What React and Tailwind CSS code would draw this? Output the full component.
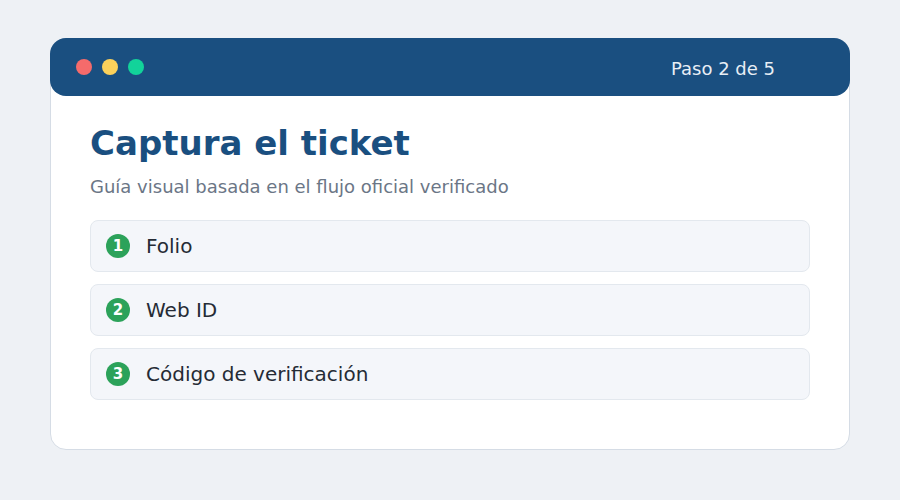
import React from "react";

const items = ["Folio", "Web ID", "Código de verificación"];

export default function App() {
  return (
    <div className="w-[900px] h-[500px] bg-[#eef1f5] flex items-start justify-center pt-[38px]" style={{ fontFamily: '"DejaVu Sans", sans-serif' }}>
      <div className="w-[800px] h-[412px] bg-white border border-[#d5dce5] rounded-2xl flex flex-col">
        <div className="h-[58px] -mx-px -mt-px bg-[#1a4f80] rounded-2xl flex items-center pl-[26px] pr-[75px]">
          <div className="flex gap-[10px]">
            <span className="w-4 h-4 rounded-full bg-[#f56b6b]" />
            <span className="w-4 h-4 rounded-full bg-[#fbd15b]" />
            <span className="w-4 h-4 rounded-full bg-[#12d39a]" />
          </div>
          <div className="ml-auto mt-[4px] text-[18px] leading-[22px] text-[#e8eef5]">Paso 2 de 5</div>
        </div>
        <div className="px-[39px] pt-[27px]">
          <h1 className="text-[34px] leading-[40px] font-bold text-[#1a4f80]">Captura el ticket</h1>
          <p className="mt-[13px] text-[18px] leading-[22px] text-[#6b7686]">Guía visual basada en el flujo oficial verificado</p>
          <div className="mt-[22px] flex flex-col gap-3">
            {items.map((t, i) => (
              <div key={t} className="h-[52px] bg-[#f4f6fa] border border-[#e3e8ee] rounded-lg flex items-center pl-[15px]">
                <span className="w-6 h-6 rounded-full bg-[#2ca25a] text-white text-[15px] font-bold flex items-center justify-center">{i + 1}</span>
                <span className="ml-4 text-[20px] leading-[24px] text-[#252b35]">{t}</span>
              </div>
            ))}
          </div>
        </div>
      </div>
    </div>
  );
}
